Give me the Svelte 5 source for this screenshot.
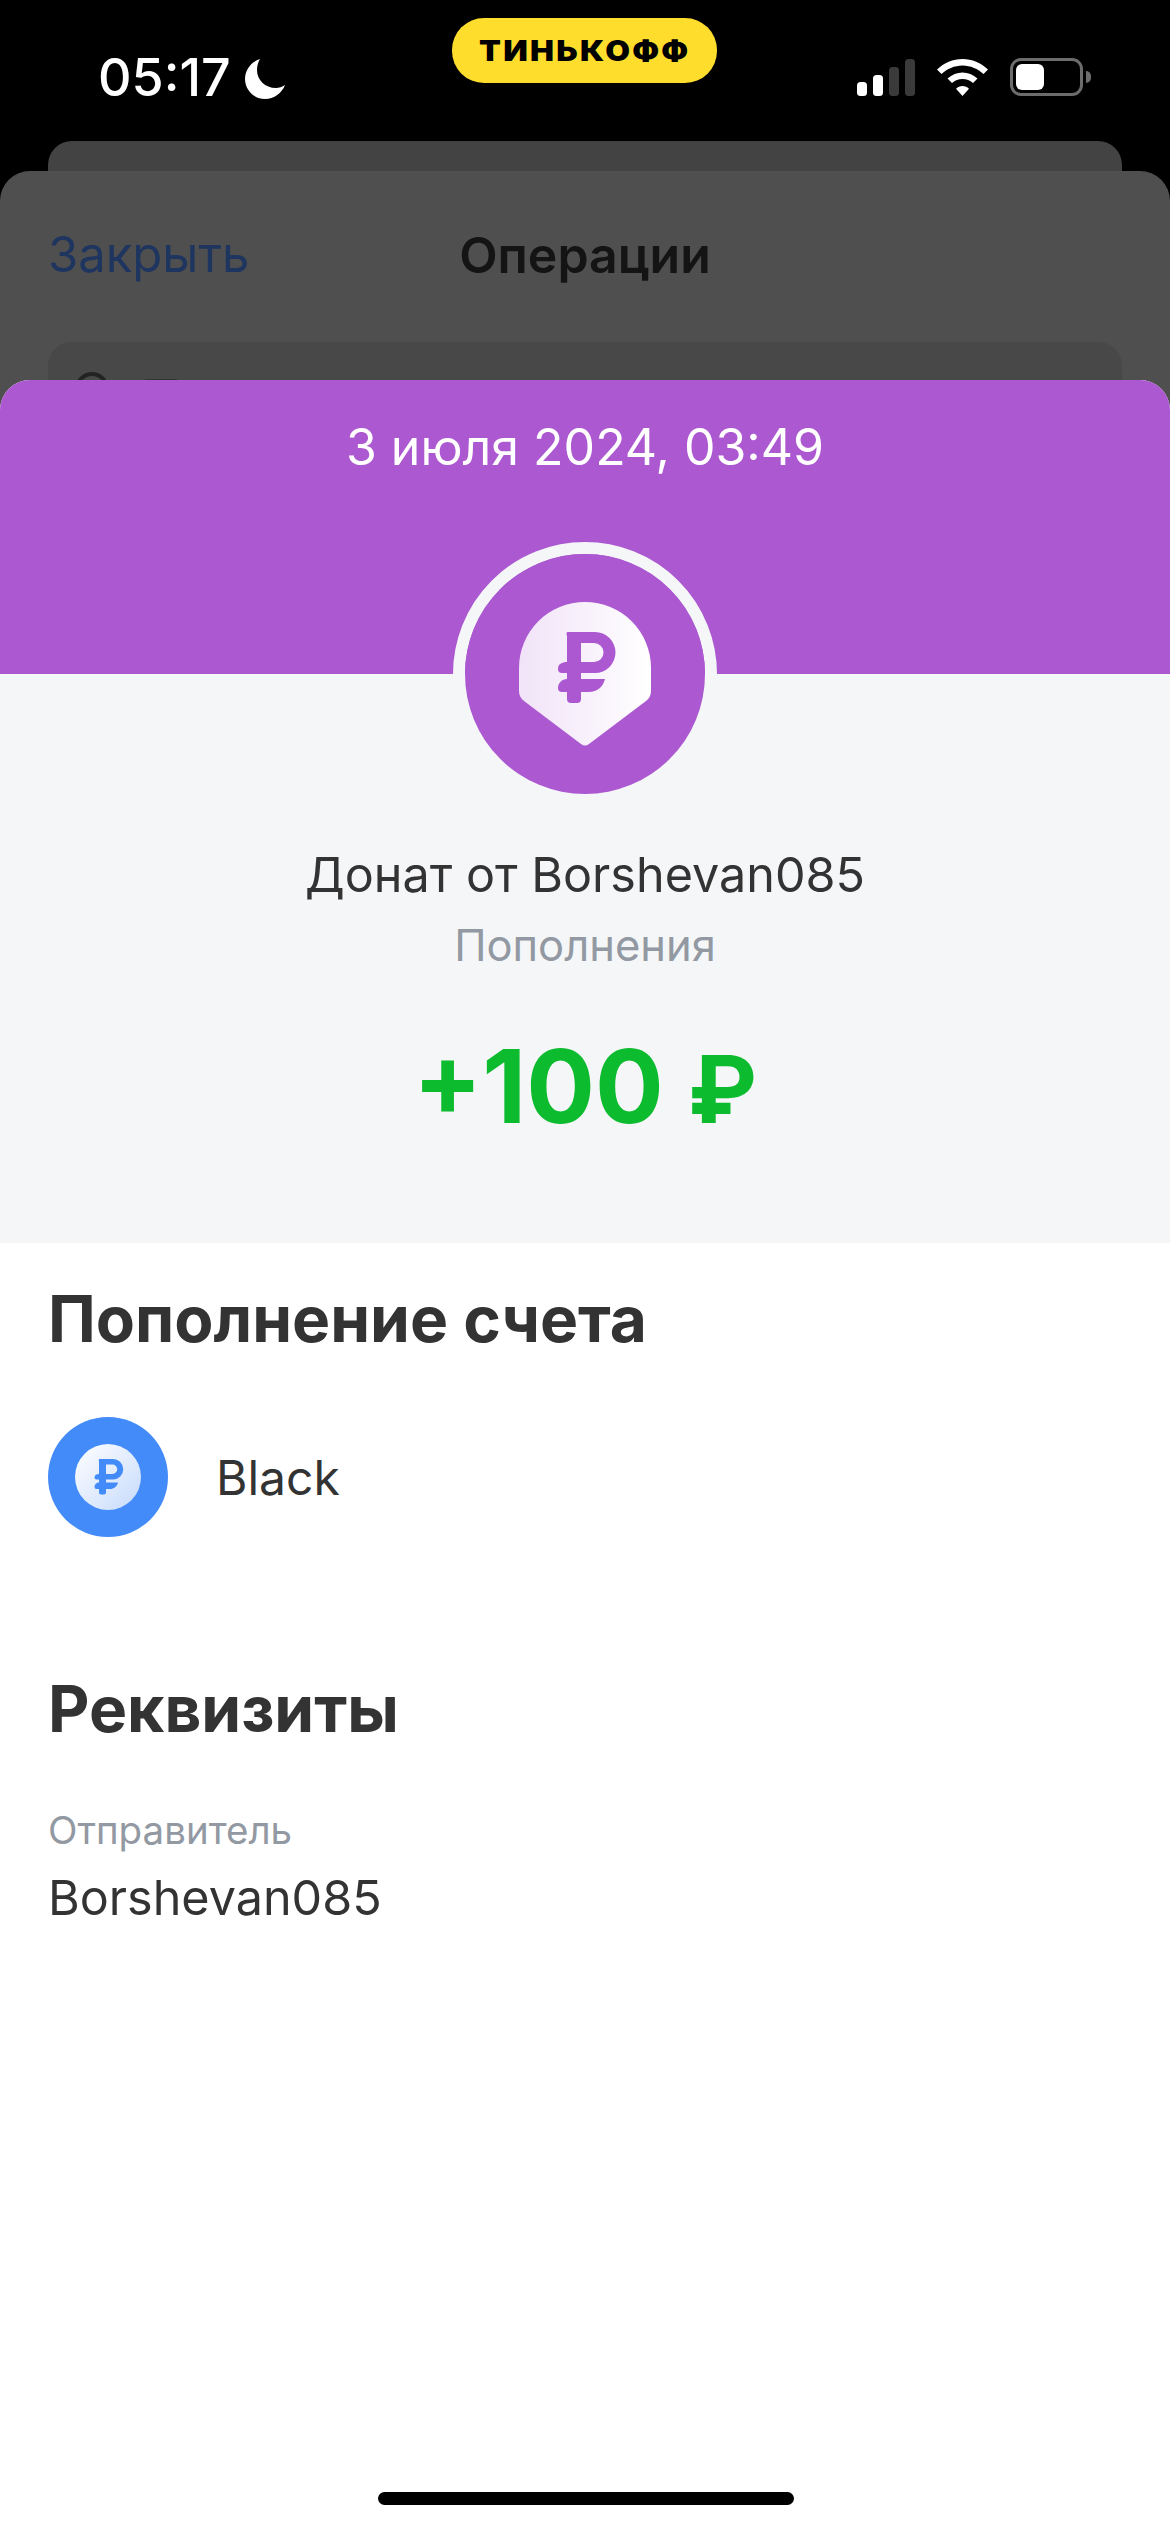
<script>
  const ruble = "M102 78H130A20.5 20.5 0 0 1 130 119H116V125H140C138 133 132 138 124 138H116V145A4 4 0 0 1 112 149H106A4 4 0 0 1 102 145V138H97A4 4 0 0 1 93 134C93 129 97 125 102 125V119H97A4 4 0 0 1 93 115C93 110 97 108 102 108V82A4 4 0 0 1 102 78ZM116 89V108H129A9.5 9.5 0 0 0 129 89Z";
  const bars = [
    { x: 0, h: 14, on: true },
    { x: 16, h: 21, on: true },
    { x: 32, h: 29, on: false },
    { x: 48, h: 37, on: false }
  ];
</script>

<div class="screen">
  <header class="status">
    <div class="clock">
      <span class="time">05:17</span>
      <svg class="moon" viewBox="0 0 40 40" aria-hidden="true">
        <path d="M15 0C6 3 0 11 0 20c0 11 9 20 20 20 9 0 17-6 20-14-3 2-6 3-9 3-11 0-19-8-19-18 0-4 1-8 3-11Z" />
      </svg>
    </div>
    <div class="pill"><span>ТИНЬКОФФ</span></div>
    <div class="indicators">
      <svg class="signal" viewBox="0 0 58 37" aria-hidden="true">
        {#each bars as b}
          <rect x={b.x} y={37 - b.h} width="10" height={b.h} rx="3.5" class:dim={!b.on} />
        {/each}
      </svg>
      <svg class="wifi" viewBox="0 0 51 37" aria-hidden="true">
        <path d="M25.5 0C35 0 44 4 51 10.500L46.500 15C41 10 33.500 6.500 25.500 6.500S10 10 4.500 15L0 10.500C7 4 16 0 25.500 0Z" />
        <path d="M25.500 13.500C31 13.500 36 15.500 40.500 19.500L36 24C33 21.500 29.500 20 25.500 20S18 21.500 15 24L10.500 19.500C15 15.500 20 13.500 25.500 13.500Z" />
        <path d="M25.500 27C28 27 30.200 28 32 29.800L25.500 37L19 29.800C20.800 28 23 27 25.500 27Z" />
      </svg>
      <div class="battery">
        <div class="cell"><div class="charge"></div></div>
        <div class="nub"></div>
      </div>
    </div>
  </header>

  <div class="backdrop">
    <div class="peek"></div>
    <div class="card">
      <div class="nav">
        <span class="close">Закрыть</span>
        <span class="nav-title">Операции</span>
      </div>
      <div class="search">
        <span class="lens"></span>
        <span class="word"></span>
      </div>
    </div>
  </div>

  <main class="sheet">
    <section class="hero">
      <div class="date">3 июля 2024, 03:49</div>
      <div class="badge">
        <svg viewBox="0 0 240 240" aria-hidden="true">
          <defs>
            <linearGradient id="pinFill" x1="0" y1="0" x2="1" y2="0">
              <stop offset="0" stop-color="#f1e3f8" />
              <stop offset="1" stop-color="#ffffff" />
            </linearGradient>
          </defs>
          <circle cx="120" cy="120" r="120" fill="#ab58d1" />
          <path d="M54 114A66 66 0 0 1 186 114V137Q186 143 181 147L124 190Q120 193 116 190L59 147Q54 143 54 137Z" fill="url(#pinFill)" />
          <path d={ruble} fill="#ab58d1" fill-rule="evenodd" />
        </svg>
      </div>
      <div class="name">Донат от Borshevan085</div>
      <div class="category">Пополнения</div>
      <div class="amount">+100 <span class="currency">₽</span></div>
    </section>

    <section class="details">
      <h2>Пополнение счета</h2>
      <div class="account">
        <svg class="acc-icon" viewBox="0 0 120 120" aria-hidden="true">
          <defs>
            <linearGradient id="coinFill" x1="0" y1="0" x2="1" y2="1">
              <stop offset="0" stop-color="#ffffff" />
              <stop offset="1" stop-color="#c6dafc" />
            </linearGradient>
          </defs>
          <circle cx="60" cy="60" r="60" fill="#428bf9" />
          <circle cx="60" cy="60" r="33" fill="url(#coinFill)" />
          <path d={ruble} fill="#428bf9" fill-rule="evenodd" transform="translate(60 60) scale(0.5) translate(-120 -114)" />
        </svg>
        <span class="acc-name">Black</span>
      </div>

      <h2 class="second">Реквизиты</h2>
      <div class="label">Отправитель</div>
      <div class="value">Borshevan085</div>
    </section>

    <div class="home"></div>
  </main>
</div>

<style>
  :global(body) {
    margin: 0;
    background: #000;
  }
  .screen {
    position: relative;
    width: 1170px;
    height: 2532px;
    overflow: hidden;
    background: #000;
    font-family: Inter, "Noto Sans", sans-serif;
  }
  .status {
    height: 141px;
    position: relative;
    display: flex;
    justify-content: space-between;
    align-items: flex-start;
    padding: 59px 79px 0 98px;
    box-sizing: border-box;
    color: #fff;
  }
  .clock {
    display: flex;
    align-items: flex-start;
    gap: 14px;
  }
  .time {
    font-size: 52px;
    font-weight: 500;
    line-height: 37px;
  }
  .moon {
    width: 40px;
    height: 40px;
    fill: #fff;
  }
  .pill {
    position: absolute;
    left: 452px;
    top: 18px;
    width: 265px;
    height: 65px;
    border-radius: 32px;
    background: #ffdd2d;
    display: flex;
    align-items: center;
    justify-content: center;
    color: #000;
    font-size: 28px;
    font-weight: 900;
    letter-spacing: 2px;
  }
  .pill span {
    display: inline-block;
    transform: scaleX(1.14);
  }
  .indicators {
    display: flex;
    align-items: flex-start;
    gap: 22px;
  }
  .signal {
    width: 58px;
    height: 37px;
    fill: #fff;
  }
  .signal .dim {
    fill: #3a3a3a;
  }
  .wifi {
    width: 51px;
    height: 37px;
    fill: #fff;
  }
  .battery {
    display: flex;
    align-items: center;
    gap: 3px;
    margin-top: -1px;
  }
  .cell {
    width: 73px;
    height: 38px;
    box-sizing: border-box;
    border: 3px solid #6c6c6c;
    border-radius: 11px;
    padding: 3px;
  }
  .charge {
    width: 28px;
    height: 100%;
    background: #fff;
    border-radius: 6px;
  }
  .nub {
    width: 5px;
    height: 12px;
    background: #6c6c6c;
    border-radius: 0 6px 6px 0;
  }
  .peek {
    height: 30px;
    margin: 0 48px;
    background: #434343;
    border-radius: 24px 24px 0 0;
  }
  .card {
    height: 700px;
    background: #4f4f4f;
    border-radius: 30px 30px 0 0;
    padding: 0 48px;
  }
  .nav {
    position: relative;
    height: 171px;
    display: flex;
    align-items: center;
  }
  .close {
    color: #1e3560;
    font-size: 49px;
    margin-top: -4px;
  }
  .nav-title {
    position: absolute;
    left: 0;
    right: 0;
    text-align: center;
    color: #141414;
    font-size: 50px;
    font-weight: 600;
    margin-top: -4px;
  }
  .search {
    height: 100px;
    background: #484848;
    border-radius: 24px;
    padding: 30px 27px 0;
    display: flex;
    align-items: flex-start;
    gap: 34px;
  }
  .lens {
    width: 34px;
    height: 34px;
    border: 4px solid #232323;
    border-radius: 50%;
    box-sizing: border-box;
  }
  .word {
    width: 36px;
    height: 20px;
    margin-top: 7px;
    background: #333;
    border-radius: 4px;
  }
  .sheet {
    position: absolute;
    left: 0;
    right: 0;
    top: 380px;
    bottom: 0;
    background: #fff;
    border-radius: 30px 30px 0 0;
    overflow: hidden;
    color: #333;
  }
  .hero {
    height: 863px;
    background: linear-gradient(#ab58d1 0 294px, #f5f6f8 294px);
    display: flex;
    flex-direction: column;
    align-items: center;
  }
  .date {
    margin-top: 38px;
    color: #fff;
    font-size: 50px;
    line-height: 58px;
  }
  .badge {
    margin-top: 66px;
    width: 240px;
    height: 240px;
    border: 12px solid #f5f6f8;
    border-radius: 50%;
    flex: none;
  }
  .badge svg {
    display: block;
    width: 240px;
    height: 240px;
  }
  .name {
    margin-top: 40px;
    font-size: 48.500px;
    line-height: 58px;
  }
  .category {
    margin-top: 18px;
    font-size: 43.500px;
    line-height: 46px;
    color: #9299a2;
  }
  .amount {
    margin-top: 56px;
    color: #0dbb2f;
    font-size: 102px;
    font-weight: 700;
    line-height: 124px;
  }
  .currency {
    font-size: 93px;
  }
  .details {
    padding: 41px 48px 0;
  }
  h2 {
    margin: 0;
    font-size: 64px;
    font-weight: 700;
    line-height: 70px;
  }
  .account {
    margin-top: 63px;
    display: flex;
    align-items: center;
    gap: 48px;
  }
  .acc-icon {
    width: 120px;
    height: 120px;
    flex: none;
  }
  .acc-name {
    font-size: 48px;
  }
  .second {
    margin-top: 137px;
  }
  .label {
    margin-top: 64px;
    font-size: 38.500px;
    line-height: 44px;
    color: #9299a2;
  }
  .value {
    margin-top: 17px;
    font-size: 48.500px;
    line-height: 58px;
  }
  .home {
    position: absolute;
    left: 378px;
    bottom: 27px;
    width: 416px;
    height: 13px;
    border-radius: 7px;
    background: #000;
  }
</style>
